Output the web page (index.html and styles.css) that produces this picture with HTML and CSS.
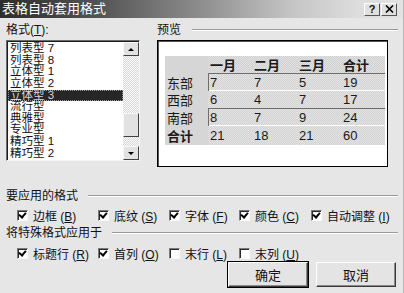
FILE: index.html
```html
<!DOCTYPE html>
<html lang="zh-CN">
<head>
  <meta charset="UTF-8">
  <title>表格自动套用格式</title>
  <link rel="stylesheet" href="styles.css">
</head>
<body>
  <div class="dialog">
    <div class="titlebar">
      <span class="title">表格自动套用格式</span>
      <div class="caption-btns">
        <span class="cbtn">?</span>
        <span class="cbtn close">
          <svg width="9" height="8" viewBox="0 0 9 8"><path d="M1 0.5 L8 7.5 M8 0.5 L1 7.5" stroke="#000" stroke-width="1.6"/></svg>
        </span>
      </div>
    </div>

    <div class="content">
      <div class="top">
        <div class="formats">
          <div class="label">格式(<u>T</u>):</div>
          <div class="listbox">
            <ul class="items">
              <li>列表型 7</li>
              <li>列表型 8</li>
              <li>立体型 1</li>
              <li>立体型 2</li>
              <li class="selected">立体型 3</li>
              <li>流行型</li>
              <li>典雅型</li>
              <li>专业型</li>
              <li>精巧型 1</li>
              <li>精巧型 2</li>
            </ul>
            <div class="scrollbar">
              <span class="sb-btn"><span class="arrow up"></span></span>
              <div class="track"><span class="thumb"></span></div>
              <span class="sb-btn"><span class="arrow down"></span></span>
            </div>
          </div>
        </div>

        <div class="preview">
          <div class="group-head preview-head"><span>预览</span><span class="groove"></span></div>
          <div class="preview-box">
            <div class="sample">
              <div class="cell corner"></div>
              <div class="cell hd">一月</div>
              <div class="cell hd">二月</div>
              <div class="cell hd">三月</div>
              <div class="cell hd">合计</div>

              <div class="cell rh">东部</div>
              <div class="cell d sunk first">7</div>
              <div class="cell d sunk">7</div>
              <div class="cell d sunk">5</div>
              <div class="cell d sunk">19</div>

              <div class="cell rh">西部</div>
              <div class="cell d">6</div>
              <div class="cell d">4</div>
              <div class="cell d">7</div>
              <div class="cell d">17</div>

              <div class="cell rh">南部</div>
              <div class="cell d sunk first">8</div>
              <div class="cell d sunk">7</div>
              <div class="cell d sunk">9</div>
              <div class="cell d sunk">24</div>

              <div class="cell rh total">合计</div>
              <div class="cell d">21</div>
              <div class="cell d">18</div>
              <div class="cell d">21</div>
              <div class="cell d">60</div>
            </div>
          </div>
        </div>
      </div>

      <div class="group-head apply-head"><span>要应用的格式</span><span class="groove"></span></div>
      <div class="checks">
        <label class="check"><span class="box on"></span><span>边框 (<u>B</u>)</span></label>
        <label class="check"><span class="box on"></span><span>底纹 (<u>S</u>)</span></label>
        <label class="check"><span class="box on"></span><span>字体 (<u>F</u>)</span></label>
        <label class="check"><span class="box on"></span><span>颜色 (<u>C</u>)</span></label>
        <label class="check"><span class="box on"></span><span>自动调整 (<u>I</u>)</span></label>
      </div>

      <div class="group-head special-head"><span>将特殊格式应用于</span><span class="groove"></span></div>
      <div class="checks">
        <label class="check"><span class="box on"></span><span>标题行 (<u>R</u>)</span></label>
        <label class="check"><span class="box on"></span><span>首列 (<u>O</u>)</span></label>
        <label class="check"><span class="box"></span><span>末行 (<u>L</u>)</span></label>
        <label class="check"><span class="box"></span><span>末列 (<u>U</u>)</span></label>
      </div>

      <div class="buttons">
        <span class="btn default">确定</span>
        <span class="btn">取消</span>
      </div>
    </div>
  </div>
</body>
</html>
```

FILE: styles.css
```css
html, body {
  margin: 0;
  background: #e6e6e6;
}
body {
  font-family: "Liberation Sans", "Noto Sans CJK SC", sans-serif;
  font-size: 12px;
  color: #111;
}
u {
  text-decoration: underline;
}
.dialog {
  width: 404px;
  height: 293px;
  box-sizing: border-box;
  border-right: 1px solid #b8b8b8;
}

/* title bar */
.titlebar {
  height: 18px;
  display: flex;
  align-items: center;
  justify-content: space-between;
  background: linear-gradient(90deg, #2c2c2c 0%, #555 25%, #8e8e8e 50%, #c4c4c4 72%, #dcdcdc 88%, #e2e2e2 100%);
  padding: 0 6px 0 2px;
}
.title {
  color: #fff;
  font-size: 13px;
  line-height: 16px;
}
.caption-btns {
  display: flex;
  gap: 1px;
}
.cbtn {
  width: 16px;
  height: 13px;
  box-sizing: border-box;
  background: #e0e0e0;
  border: 1px solid;
  border-color: #fff #555 #555 #fff;
  display: flex;
  align-items: center;
  justify-content: center;
  font-weight: bold;
  font-size: 11px;
  line-height: 11px;
}

.content {
  padding: 5px 5px 0 6px;
}

/* top area */
.top {
  display: flex;
  gap: 17px;
  height: 149px;
}
.formats {
  width: 134px;
}
.label {
  line-height: 14px;
  height: 14px;
}
.listbox {
  margin-top: 3px;
  height: 121px;
  box-sizing: border-box;
  border: 1px solid;
  border-color: #6a6a6a #f4f4f4 #f4f4f4 #6a6a6a;
  box-shadow: inset 1px 1px 0 #1c1c1c;
  background: #fff;
  display: flex;
  padding: 1px 0 0 1px;
}
.items {
  list-style: none;
  margin: 0;
  padding: 1px 0 0 0;
  flex: 1;
  font-size: 11.5px;
}
.items li {
  height: 11.65px;
  line-height: 11.65px;
  padding-left: 2px;
  white-space: nowrap;
}
.items li.selected {
  background: #262626;
  color: #d8d8d8;
  outline: 1px dotted #999;
  outline-offset: -1px;
}
.scrollbar {
  width: 16px;
  display: flex;
  flex-direction: column;
}
.sb-btn {
  height: 14px;
  box-sizing: border-box;
  background: #e2e2e2;
  border: 1px solid;
  border-color: #f8f8f8 #404040 #404040 #f8f8f8;
  display: flex;
  align-items: center;
  justify-content: center;
}
.arrow {
  width: 0;
  height: 0;
  border-left: 3px solid transparent;
  border-right: 3px solid transparent;
}
.arrow.up {
  border-bottom: 3px solid #000;
}
.arrow.down {
  border-top: 3px solid #000;
}
.track {
  flex: 1;
  background: repeating-conic-gradient(#fafafa 0 25%, #d8d8d8 0 50%) 0 0 / 2px 2px;
  display: flex;
  flex-direction: column;
  padding-top: 57px;
}
.thumb {
  height: 24px;
  box-sizing: border-box;
  background: #e2e2e2;
  border: 1px solid;
  border-color: #f8f8f8 #404040 #404040 #f8f8f8;
}

/* group header with etched line */
.group-head {
  display: flex;
  align-items: center;
  height: 14px;
  line-height: 14px;
  gap: 10px;
}
.groove {
  flex: 1;
  height: 0;
  border-top: 1px solid #9a9a9a;
  border-bottom: 1px solid #fff;
}
.preview-head {
  gap: 11px;
}

/* preview */
.preview {
  flex: 1;
}
.preview-box {
  margin-top: 3px;
  width: 231px;
  height: 127px;
  box-sizing: border-box;
  border: 1px solid #000;
  box-shadow: inset 1px 1px 0 #555;
  background: #fff;
  padding: 15px 0 0 7px;
}
.sample {
  display: grid;
  grid-template-columns: 43px 44px 45px 44px 44px;
  grid-template-rows: 17px 18px 17px 18px 19px;
  width: 220px;
  background: #d6d6d6;
  font-size: 13px;
}
.cell {
  display: flex;
  align-items: center;
  padding-left: 2px;
  color: #1a1a1a;
}
.hd {
  font-weight: bold;
  background: repeating-conic-gradient(#cfcfcf 0 25%, #e2e2e2 0 50%) 0 0 / 2px 2px;
}
.d {
  background: repeating-conic-gradient(#d2d2d2 0 25%, #e4e4e4 0 50%) 0 0 / 2px 2px;
}
.sunk {
  box-shadow: inset 0 1px 0 #6e6e6e, inset 0 -1px 0 #fff;
}
.sunk.first {
  box-shadow: inset 1px 1px 0 #6e6e6e, inset 0 -1px 0 #fff;
}
.total {
  font-weight: bold;
}

/* option groups */
.apply-head {
  margin-top: 17px;
}
.special-head {
  margin-top: 3px;
}
.checks {
  display: grid;
  grid-template-columns: 81px 71px 70px 72px 1fr;
  height: 16px;
  margin-top: 4px;
  padding-left: 11px;
}
.check {
  display: flex;
  align-items: center;
  gap: 5px;
  white-space: nowrap;
}
.box {
  width: 11px;
  height: 11px;
  box-sizing: border-box;
  border: 1px solid;
  border-color: #7a7a7a #fafafa #fafafa #7a7a7a;
  box-shadow: inset 1px 1px 0 #2a2a2a;
  background: #fff;
  position: relative;
}
.box.on::after {
  content: "";
  position: absolute;
  left: 2px;
  top: 0;
  width: 3px;
  height: 5px;
  border: solid #000;
  border-width: 0 2px 2px 0;
  transform: rotate(40deg);
}
.special-head + .checks {
  margin-top: 5px;
}

/* buttons */
.buttons {
  display: flex;
  justify-content: flex-end;
  gap: 8px;
  margin-top: 1px;
  padding-right: 2px;
}
.btn {
  width: 80px;
  height: 25px;
  box-sizing: border-box;
  display: flex;
  align-items: center;
  justify-content: center;
  background: #e4e4e4;
  border: 1px solid;
  border-color: #fff #3a3a3a #3a3a3a #fff;
  box-shadow: inset -1px -1px 0 #8a8a8a;
  font-size: 13px;
}
.btn.default {
  outline: 1px solid #000;
  outline-offset: 0;
}
```
